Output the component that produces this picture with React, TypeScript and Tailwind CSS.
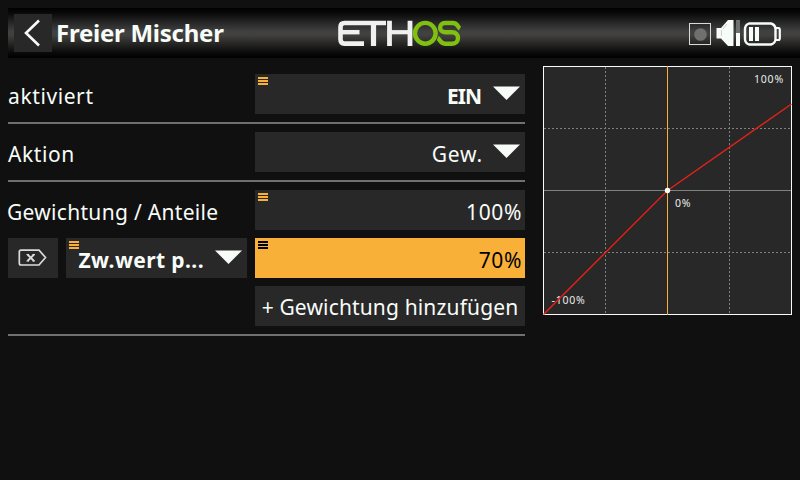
import React from "react";

const FONT = "font-['Noto_Sans','Open_Sans',sans-serif]";

function MenuMark({ dark = false }: { dark?: boolean }) {
  const bar = dark ? "h-[2px] bg-black" : "h-[2px] bg-[#f8b038]";
  return (
    <div className="absolute left-[3px] top-[3px] flex w-[10px] flex-col gap-px">
      <div className={bar} />
      <div className={bar} />
      <div className={bar} />
    </div>
  );
}

function Caret() {
  return (
    <svg width="27" height="14" viewBox="0 0 27 14" className="mb-[2px] shrink-0">
      <path d="M0 .500H27L13.500 14Z" fill="#f8fcf8" />
    </svg>
  );
}

function Divider() {
  return <div className="my-2 h-[2px] bg-[#707070]" />;
}

function BackButton() {
  return (
    <button className="ml-[6px] flex h-[38px] w-[38px] items-center justify-center bg-[#282828]">
      <svg width="38" height="38" viewBox="0 0 38 38" fill="none">
        <path d="M25 6.500L12 19L25 31.500" stroke="#f8fcf8" strokeWidth="2.600" />
      </svg>
    </button>
  );
}

function Logo() {
  return (
    <svg width="124" height="28" viewBox="0 0 124 28" fill="none">
      <g stroke="#f0f0f0">
        <path d="M48 4H6.500Q2.500 4 2.500 8V20.500Q2.500 24.600 6.500 24.600H26" strokeWidth="4.600" />
        <path d="M3 13.200H21.500" strokeWidth="4.400" />
        <path d="M35.500 4V27" strokeWidth="5.200" />
        <path d="M51.500 1.700V27M72 1.700V27" strokeWidth="4.800" />
        <path d="M52 13.200H72" strokeWidth="4.200" />
      </g>
      <g stroke="#80c010" strokeWidth="4.400">
        <ellipse cx="87.300" cy="14.300" rx="10.300" ry="10.400" />
        <path d="M122 9.500C119.500 8 120 4 114.500 4H107C100.500 4 100.500 13.300 107 13.300H114C122 13.300 122 24.700 114 24.700H107C102 24.700 102 20 99.700 19" />
      </g>
    </svg>
  );
}

function StatusIcons() {
  return (
    <svg width="120" height="50" viewBox="680 8 120 50" fill="none">
      <rect x="689.500" y="23.500" width="21" height="21" stroke="#d8dcd8" />
      <circle cx="700.500" cy="34.500" r="6.300" fill="#707070" />
      <path d="M716.500 28H721L728 20H733.500V46H728L721 38.500H716.500Z" fill="#f8fcf8" />
      <path d="M721.500 30V36M727 24L723 29" stroke="#b8bcb8" strokeWidth=".7" />
      <path d="M736 20H740V33H736Z" fill="#707070" />
      <path d="M736 33H740V46H736Z" fill="#f8fcf8" />
      <path d="M749 23.500H771Q775.500 25 775.500 29V39Q775.500 43 771 44.500H749Q745 43 745 39V29Q745 25 749 23.500Z" stroke="#f8fcf8" strokeWidth="2.400" />
      <path d="M776 28H778.500Q779.800 28 779.800 30V38Q779.800 40 778.500 40H776" stroke="#f8fcf8" strokeWidth="2.200" />
      <path d="M749 27H753V41H749ZM755 27H759V41H755Z" fill="#f8fcf8" />
    </svg>
  );
}

function Header() {
  return (
    <header className="mt-2 ml-2 grid h-[50px] grid-cols-[330px_342px_120px] items-center bg-[linear-gradient(to_bottom,#000_0%,#080908_10%,#404040_46%,#424140_54%,#080908_90%,#000_100%)]">
      <div className="flex items-center">
        <BackButton />
        <h1 className="ml-[4px] whitespace-nowrap text-[24px] leading-[38px] font-bold tracking-[-0.25px]">Freier Mischer</h1>
      </div>
      <div className="pb-[1px]">
        <Logo />
      </div>
      <StatusIcons />
    </header>
  );
}

function Chart() {
  return (
    <svg width="249" height="249" viewBox="0 0 249 249" className="shrink-0" shapeRendering="crispEdges">
      <rect x=".5" y=".5" width="248" height="248" fill="#282828" stroke="#f8fcf8" />
      <g stroke="#808080" strokeDasharray="2 2">
        <path d="M62.500 1V248M186.500 1V248M1 62.500H248M1 186.500H248" />
      </g>
      <path d="M1 124.500H248" stroke="#808080" />
      <path d="M124.500 0V249" stroke="#f8b038" />
      <g className={FONT} fill="#e8ece8" fontSize="10.500" letterSpacing=".8">
        <text x="211" y="17">100%</text>
        <text x="132" y="141">0%</text>
        <text x="8.500" y="238">-100%</text>
      </g>
      <path d="M.5 248.500L124.500 124.500L248.500 38" fill="none" stroke="#e82018" strokeWidth="1.400" shapeRendering="auto" />
      <circle cx="124.500" cy="124.500" r="2.700" fill="#f8fcf8" shapeRendering="auto" />
    </svg>
  );
}

const field = "relative flex h-10 w-[270px] items-center justify-end bg-[#282828]";

export default function App() {
  return (
    <main className={`${FONT} flex h-[480px] w-[800px] flex-col overflow-hidden bg-[#101010] text-[21px] text-[#f8fcf8]`}>
      <Header />
      <div className="flex gap-[18px] pt-2 pl-2">
        <section className="w-[517px] pt-2">
          <div className="flex items-center justify-between">
            <span className="pt-1.5 tracking-[0.6px]">aktiviert</span>
            <div className={`${field} gap-[12px] pr-[5px]`}>
              <MenuMark />
              <span className="pt-1.5 font-bold tracking-[-1px]">EIN</span>
              <Caret />
            </div>
          </div>
          <Divider />
          <div className="flex items-center justify-between">
            <span className="pt-1.5 tracking-[0.6px]">Aktion</span>
            <div className={`${field} gap-[10px] pr-[5px]`}>
              <span className="pt-1.5 tracking-[0.8px]">Gew.</span>
              <Caret />
            </div>
          </div>
          <Divider />
          <div className="flex flex-col gap-2">
            <div className="flex items-center justify-between">
              <span className="-ml-px pt-1.5 tracking-[0.3px]">Gewichtung / Anteile</span>
              <div className={`${field} pr-[3px]`}>
                <MenuMark />
                <span className="pt-1.5 tracking-[0.6px]">100%</span>
              </div>
            </div>
            <div className="flex gap-2">
              <button className="flex h-10 w-[50px] items-center justify-center bg-[#282828]">
                <svg width="50" height="40" viewBox="0 0 50 40" fill="none" stroke="#d8dcd8">
                  <path d="M13 12.200H31L37.500 19.500L31 27H13Q11.300 27 11.300 25V14Q11.300 12.200 13 12.200Z" strokeWidth="1.700" />
                  <path d="M19.500 16.500L26 23M26 16.500L19.500 23" strokeWidth="1.900" />
                  <path d="M18.500 16.500H21M24.500 16.500H27M18.500 23H21M24.500 23H27" strokeWidth="1" />
                </svg>
              </button>
              <div className="relative flex h-10 w-[181px] items-center justify-between bg-[#282828] pr-[5px] pl-[12.5px]">
                <MenuMark />
                <span className="pt-1.5 font-bold tracking-[0.4px]">Zw.wert p...</span>
                <Caret />
              </div>
              <div className="relative flex h-10 w-[270px] items-center justify-end bg-[#f8b038] pr-[3px] text-black">
                <MenuMark dark />
                <span className="pt-1.5 tracking-[0.6px]">70%</span>
              </div>
            </div>
            <button className="flex h-10 w-[270px] items-center justify-center self-end whitespace-nowrap bg-[#282828] pt-1 tracking-[0.15px]">
              + Gewichtung hinzufügen
            </button>
          </div>
          <Divider />
        </section>
        <Chart />
      </div>
    </main>
  );
}
